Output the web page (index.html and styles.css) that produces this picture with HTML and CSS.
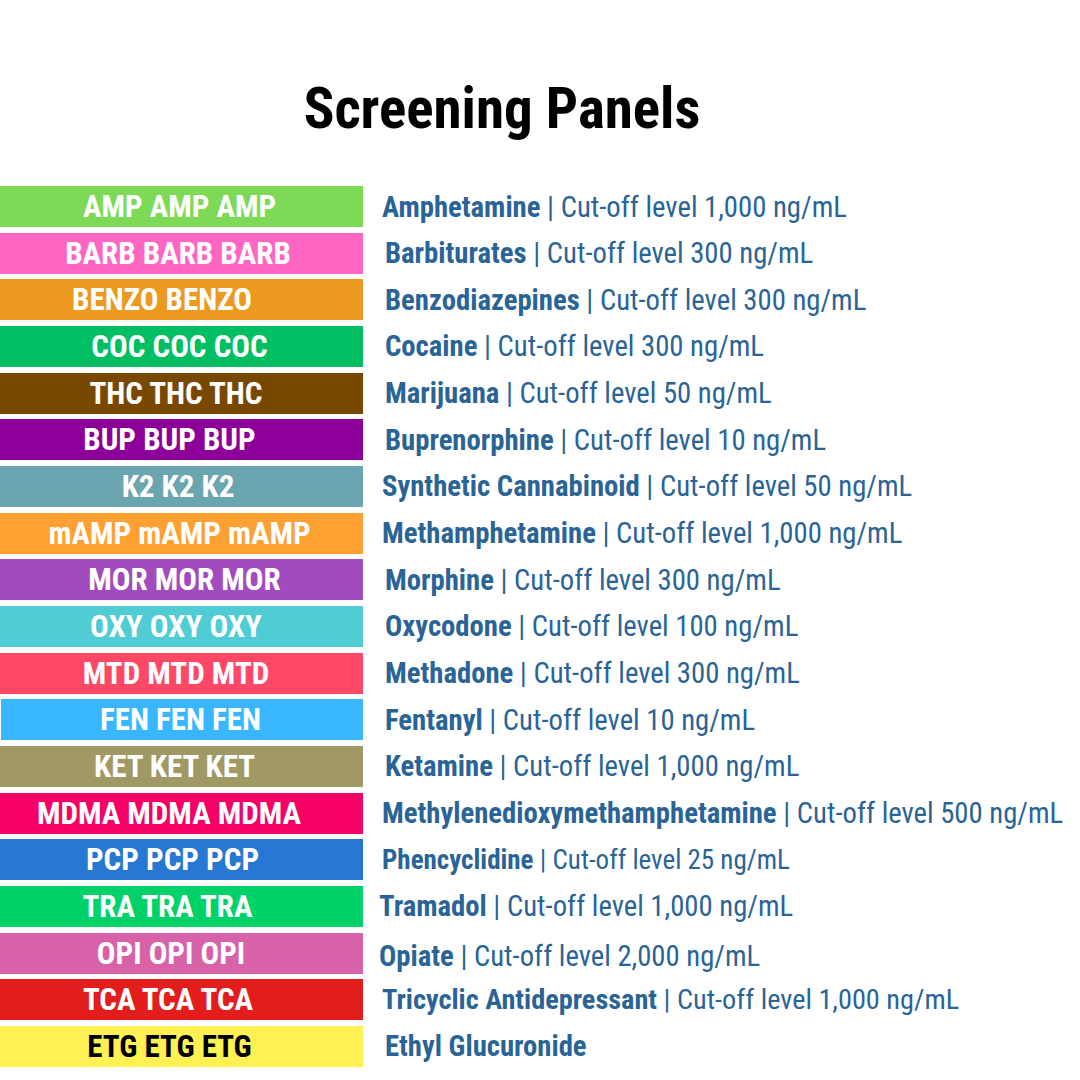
FILE: index.html
```html
<!DOCTYPE html>
<html lang="en">
<head>
<meta charset="utf-8">
<title>Screening Panels</title>
<link rel="stylesheet" href="styles.css">
</head>
<body>
<main class="page">
  <h1 class="title">Screening Panels</h1>
  <ul class="panels">
    <li class="row"><span class="tag amp">AMP AMP AMP</span><p class="desc shift-l"><b>Amphetamine</b> | Cut-off level 1,000 ng/mL</p></li>
    <li class="row"><span class="tag barb">BARB BARB BARB</span><p class="desc"><b>Barbiturates</b> | Cut-off level 300 ng/mL</p></li>
    <li class="row"><span class="tag benzo">BENZO BENZO</span><p class="desc"><b>Benzodiazepines</b> | Cut-off level 300 ng/mL</p></li>
    <li class="row"><span class="tag coc">COC COC COC</span><p class="desc"><b>Cocaine</b> | Cut-off level 300 ng/mL</p></li>
    <li class="row"><span class="tag thc">THC THC THC</span><p class="desc"><b>Marijuana</b> | Cut-off level 50 ng/mL</p></li>
    <li class="row"><span class="tag bup">BUP BUP BUP</span><p class="desc"><b>Buprenorphine</b> | Cut-off level 10 ng/mL</p></li>
    <li class="row"><span class="tag k2">K2 K2 K2</span><p class="desc shift-l"><b>Synthetic Cannabinoid</b> | Cut-off level 50 ng/mL</p></li>
    <li class="row"><span class="tag mamp">mAMP mAMP mAMP</span><p class="desc shift-l"><b>Methamphetamine</b> | Cut-off level 1,000 ng/mL</p></li>
    <li class="row"><span class="tag mor">MOR MOR MOR</span><p class="desc"><b>Morphine</b> | Cut-off level 300 ng/mL</p></li>
    <li class="row"><span class="tag oxy">OXY OXY OXY</span><p class="desc"><b>Oxycodone</b> | Cut-off level 100 ng/mL</p></li>
    <li class="row"><span class="tag mtd">MTD MTD MTD</span><p class="desc"><b>Methadone</b> | Cut-off level 300 ng/mL</p></li>
    <li class="row"><span class="tag fen">FEN FEN FEN</span><p class="desc"><b>Fentanyl</b> | Cut-off level 10 ng/mL</p></li>
    <li class="row"><span class="tag ket">KET KET KET</span><p class="desc"><b>Ketamine</b> | Cut-off level 1,000 ng/mL</p></li>
    <li class="row"><span class="tag mdma">MDMA MDMA MDMA</span><p class="desc shift-l"><b>Methylenedioxymethamphetamine</b> | Cut-off level 500 ng/mL</p></li>
    <li class="row"><span class="tag pcp">PCP PCP PCP</span><p class="desc shift-l small"><b>Phencyclidine</b> | Cut-off level 25 ng/mL</p></li>
    <li class="row"><span class="tag tra">TRA TRA TRA</span><p class="desc shift-ll"><b>Tramadol</b> | Cut-off level 1,000 ng/mL</p></li>
    <li class="row"><span class="tag opi">OPI OPI OPI</span><p class="desc shift-ll low"><b>Opiate</b> | Cut-off level 2,000 ng/mL</p></li>
    <li class="row"><span class="tag tca">TCA TCA TCA</span><p class="desc shift-l snug"><b>Tricyclic Antidepressant</b> | Cut-off level 1,000 ng/mL</p></li>
    <li class="row"><span class="tag etg">ETG ETG ETG</span><p class="desc"><b>Ethyl Glucuronide</b></p></li>
  </ul>
</main>
</body>
</html>
```

FILE: styles.css
```css
* { box-sizing: border-box; }
html, body {
  margin: 0;
  padding: 0;
  background: #ffffff;
}
.page {
  width: 1080px;
  height: 1080px;
  font-family: "Roboto Condensed", "Liberation Sans Narrow", "DejaVu Sans Condensed", Roboto, sans-serif;
  font-stretch: condensed;
  overflow: hidden;
}
.title {
  margin: 79px 0 0 0;
  padding-right: 76px;
  height: 60px;
  line-height: 60px;
  font-size: 57px;
  font-weight: 700;
  color: #000;
  text-align: center;
}
.panels {
  list-style: none;
  margin: 47px 0 0 0;
  padding: 0;
}
.row {
  display: grid;
  grid-template-columns: 363px 1fr;
  align-items: start;
  height: 46.67px;
}
.tag {
  display: flex;
  align-items: center;
  justify-content: center;
  height: 41px;
  padding-right: 4px;
  font-size: 31px;
  font-weight: 700;
  color: #fff;
  white-space: nowrap;
}
.desc {
  margin: 0;
  height: 41px;
  display: flex;
  align-items: center;
  padding-left: 22px;
  font-size: 28.7px;
  font-weight: 400;
  color: #2a6496;
  white-space: pre;
}
.desc b { font-weight: 700; }
.desc.shift-l { padding-left: 19px; }
.desc.shift-ll { padding-left: 16px; }
.desc.low { padding-top: 6px; }
.desc.small { font-size: 27px; }
.desc.snug { font-size: 28.3px; }

.amp { background: #7ed957; }
.barb { background: #ff66c4; padding-right: 7px; }
.benzo { background: #ec9a1f; padding-right: 39px; }
.coc { background: #00bf63; }
.thc { background: #784800; padding-right: 11px; }
.bup { background: #8c0099; padding-right: 24px; }
.k2 { background: #6aa6b0; padding-right: 7px; }
.mamp { background: #ffa033; }
.mor { background: #a24bbf; padding-right: 0; padding-left: 6px; }
.oxy { background: #50ccd4; padding-right: 11px; }
.mtd { background: #ff4766; padding-right: 11px; }
.fen { background: #38b6ff; margin-left: 1px; padding-right: 3px; }
.ket { background: #a09963; padding-right: 14px; }
.mdma { background: #f50065; padding-right: 25px; }
.pcp { background: #2778d3; padding-right: 18px; }
.tra { background: #00d26a; padding-right: 28px; }
.opi { background: #d762a8; padding-right: 21px; }
.tca { background: #e31c1c; padding-right: 27px; }
.etg { background: #fff153; color: #000; padding-right: 24px; }
```
